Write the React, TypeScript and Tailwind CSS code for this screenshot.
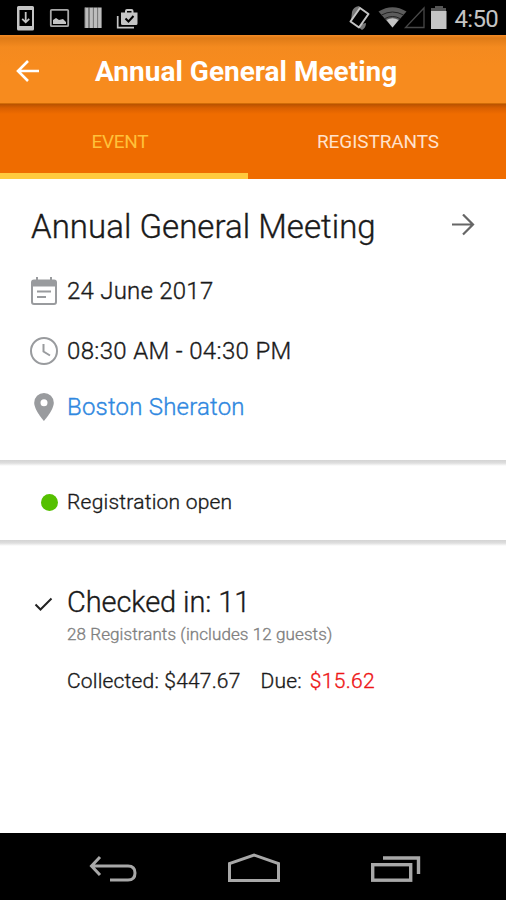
import React from 'react';

const StatusBar: React.FC = () => (
  <div className="flex h-[35px] shrink-0 items-center justify-between bg-black pl-4 pr-2 text-[#c4c4c4]">
    <div className="flex items-center">
      <svg className="h-[35px] w-[130px]" viewBox="16 0 130 35" fill="none">
        <path fill="#c4c4c4" fillRule="evenodd" d="M18.500 6h14q1.500 0 1.500 1.500v21.500q0 1.500 -1.500 1.500h-14q-1.500 0 -1.500 -1.500v-21.500q0 -1.500 1.500 -1.500zM19.500 10v16h12.500v-16z" />
        <path stroke="#c4c4c4" strokeWidth="1.800" d="M25.700 12v10M22.200 18.800l3.500 3.500l3.500 -3.500" />
        <rect x="50.800" y="9.800" width="17.400" height="16.400" rx="1" stroke="#a8a8a8" strokeWidth="1.800" />
        <path fill="#c4c4c4" d="M53 24v-4l3 -2l3 2l4 -1l3 3v2z" />
        <path stroke="#bdbdbd" strokeWidth="3.600" d="M86.800 7.500v20.500M91.200 7.500v20.500M95.500 7.500v20.500M99.800 7.500v20.500" />
        <path stroke="#8c8c8c" strokeWidth="1" d="M85 7.500v20.500M89 7.500v20.500M93.300 7.500v20.500M97.700 7.500v20.500" />
        <path stroke="#c4c4c4" strokeWidth="1.700" d="M117.700 16v11.700h16.300" />
        <path fill="#c4c4c4" fillRule="evenodd" d="M121 12.500h4v-1.500q0 -2 2 -2h4.500q2 0 2 2v1.500h4v11q0 1.500 -1.500 1.500h-13.500q-1.500 0 -1.500 -1.500zM127 12.500h4.500v-1.500h-4.500z" />
        <path stroke="#000000" strokeWidth="2" d="M125.500 18.500l3 3l5 -5.500" />
      </svg>
    </div>
    <div className="flex items-center">
      <svg className="h-[35px] w-[102px]" viewBox="347 0 102 35" fill="none">
        <path fill="#777777" d="M352 12q1 -5 7 -6l2 2l-10 13zM356 25l6 5q4 -2 4 -7z" />
        <path fill="#000000" stroke="#c4c4c4" strokeWidth="2" strokeLinejoin="round" d="M360 8l8.500 6l-9.500 13.500l-8.500 -6z" />
        <path fill="#5c5c5c" d="M378.500 11.500q14 -8.500 28 0l-14 16z" />
        <path stroke="#222222" strokeWidth="1" d="M381.500 15q11 -6 22 0M385 18.500q7.500 -4 15 0" />
        <path fill="#c4c4c4" d="M386.500 20q6 -3.500 12 0l-6 7.500z" />
        <path stroke="#484848" strokeWidth="1.300" d="M405.500 27.500h18.500v-19.500z" />
        <path fill="#555555" d="M431 11v-3h4v-2h8v2h3v3z" />
        <rect x="431" y="11" width="15.500" height="18" fill="#c4c4c4" />
      </svg>
      <span className="ml-1.5 mt-0.5 text-[24px] leading-none tracking-[-0.7px]">4:50</span>
    </div>
  </div>
);

const Header: React.FC = () => (
  <>
    <div className="flex h-[69px] shrink-0 items-center border-b border-[#d16c08] bg-[linear-gradient(180deg,#f38b26_0px,#df7b17_3px,#f48a1f_12px,#f78b1e_30px)] pl-4">
      <svg className="mt-[3px] h-6 w-6 shrink-0" viewBox="0 0 24 24" fill="none" stroke="#fff" strokeWidth="2.600">
        <path d="M2 12h21M12 2l-10 10l10 10" />
      </svg>
      <h1 className="ml-[55px] mt-1.5 whitespace-nowrap text-[28px] font-bold leading-none text-white">Annual General Meeting</h1>
    </div>
    <div className="flex h-[75px] shrink-0 bg-[linear-gradient(180deg,#b85200_0px,#d95f00_4px,#ef6c00_10px)] text-[19px] leading-none tracking-[-0.1px]">
      <div className="flex w-[248px] justify-center border-b-[6px] border-[#ffca3e] pr-2 pt-7 text-[#ffc13a]">
        <span className="tracking-[-0.3px]">EVENT</span>
      </div>
      <div className="flex flex-1 justify-center pl-0.5 pt-7 text-[#ffe2cc]">
        <span>REGISTRANTS</span>
      </div>
    </div>
  </>
);

const EventCard: React.FC = () => (
  <section className="flex h-[281px] shrink-0 flex-col pl-[30px] pt-6 text-[24px] font-light tracking-[0.24px] text-[#1a1a1a] [-webkit-text-stroke:0.35px]">
    <div className="flex h-[46px] items-center justify-between pl-px pr-[31px]">
      <h2 className="whitespace-nowrap text-[33px] font-light leading-none tracking-[0.04px] text-[#1a1a1a]">Annual General Meeting</h2>
      <svg className="h-6 w-6" viewBox="0 0 24 24" fill="none" stroke="#666" strokeWidth="2.200">
        <path d="M1 10.500h21M12 0.500l10 10l-10 10" />
      </svg>
    </div>
    <div className="mt-[22px] flex h-10 items-center">
      <svg className="mr-[9px] h-7 w-7" viewBox="0 0 28 28" fill="none" stroke="#999b9e">
        <rect x="2" y="3.500" width="24" height="23.500" rx="2" strokeWidth="2" />
        <path strokeWidth="6" d="M2 6.500h24" />
        <path strokeWidth="2" d="M7 0v5M21 0v5M7 14.500h14M7 20h9" />
      </svg>
      <span>24 June 2017</span>
    </div>
    <div className="mt-5 flex h-10 items-center">
      <svg className="mr-[9px] h-7 w-7" viewBox="0 0 28 28" fill="none" stroke="#999b9e" strokeWidth="2">
        <circle cx="14" cy="14" r="13" />
        <path d="M13.500 7v7.500l6.500 4" />
      </svg>
      <span className="tracking-[0.34px]">08:30 AM - 04:30 PM</span>
    </div>
    <div className="mt-4 flex h-10 items-center text-[#2f88e0]">
      <svg className="mr-[9px] h-7 w-7" viewBox="0 0 28 28" fill="#999b9e">
        <path fillRule="evenodd" d="M14 0a9.800 9.800 0 0 0 -9.800 9.800c0 7.200 9.800 18.200 9.800 18.200s9.800 -11 9.800 -18.200a9.800 9.800 0 0 0 -9.800 -9.800zM14 6.300a3.500 3.500 0 1 1 0 7a3.500 3.500 0 0 1 0 -7z" />
      </svg>
      <span className="tracking-[0.2px]">Boston Sheraton</span>
    </div>
  </section>
);

const Divider: React.FC = () => (
  <div className="h-1.5 shrink-0 bg-[linear-gradient(180deg,#d4d4d4_0px,#dedede_3px,#ffffff_6px)]" />
);

const Summary: React.FC = () => (
  <section className="flex flex-1 pl-[34px] pt-[39px]">
    <svg className="mr-[14px] mt-3 h-[15px] w-[19px] shrink-0" viewBox="0 0 19 15" fill="none" stroke="#222" strokeWidth="2">
      <path d="M1.500 7.500l5 5l11 -11" />
    </svg>
    <div className="whitespace-nowrap font-light [-webkit-text-stroke:0.35px]">
      <div className="text-[29px] leading-[34px] tracking-[-0.1px] text-[#1a1a1a]">Checked in: 11</div>
      <div className="mt-[5px] text-[17px] leading-5 tracking-[0.09px] text-[#808080]">28 Registrants (includes 12 guests)</div>
      <div className="mt-[25px] flex text-[21px] leading-6 tracking-[0.18px] text-[#1a1a1a]">
        <span>Collected: $447.67</span>
        <span className="ml-5">Due:</span>
        <span className="ml-2 tracking-[0.3px] text-[#ee1515]">$15.62</span>
      </div>
    </div>
  </section>
);

const NavBar: React.FC = () => (
  <nav className="flex h-[67px] shrink-0 items-center justify-between bg-black pl-[89px] pr-[85px]">
    <svg className="mt-1 h-8 w-12" viewBox="0 0 48 32" fill="none" stroke="#a8a8a8" strokeWidth="3">
      <path d="M2 13h37q7 0 7 7t-7 7h-18M11 4l-8.500 9l8.500 9" />
    </svg>
    <svg className="mt-1 h-8 w-[54px]" viewBox="0 0 54 32" fill="none" stroke="#a8a8a8" strokeWidth="3">
      <path d="M2.500 27.500v-17l24.500 -8.500l24.500 8.500v17z" />
    </svg>
    <svg className="mt-1 h-8 w-[50px]" viewBox="0 0 50 32" fill="none" stroke="#a8a8a8">
      <rect x="1.700" y="11.700" width="38" height="15.500" strokeWidth="3.400" />
      <path strokeWidth="3.400" d="M12 5h35.500v16" />
    </svg>
  </nav>
);

const App: React.FC = () => {
  return (
    <div className="flex h-[900px] w-[506px] flex-col overflow-hidden bg-white font-['Roboto',sans-serif]">
      <StatusBar />
      <Header />
      <EventCard />
      <Divider />
      <div className="flex h-[74px] shrink-0 items-center pl-[41px] text-[21px] font-light tracking-[0.22px] text-[#1a1a1a] [-webkit-text-stroke:0.35px]">
        <span className="mb-0.5 mr-[9px] h-[17px] w-[17px] rounded-full bg-[#55c000]" />
        <span>Registration open</span>
      </div>
      <Divider />
      <Summary />
      <NavBar />
    </div>
  );
};

export default App;
